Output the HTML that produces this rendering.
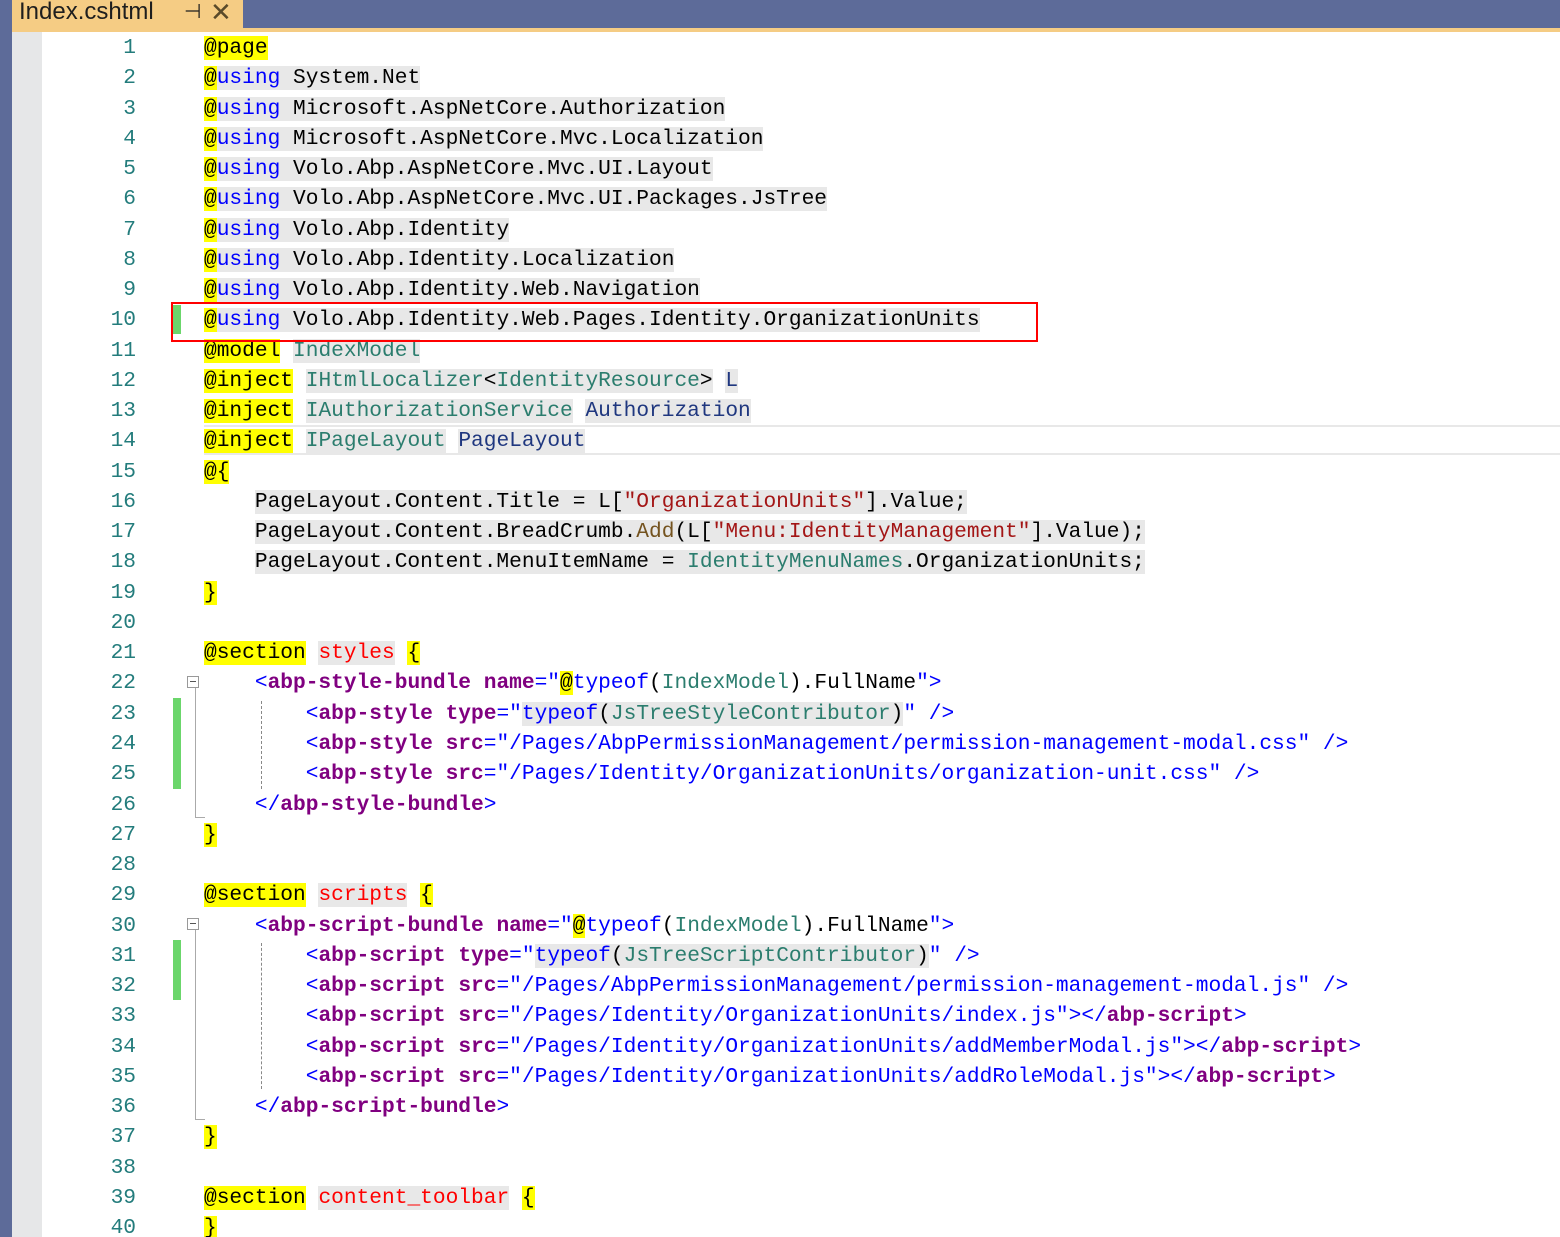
<!DOCTYPE html>
<html><head><meta charset="utf-8"><style>
html,body{margin:0;padding:0;width:1560px;height:1237px;overflow:hidden;background:#fff;position:relative}
.topbar{position:absolute;left:0;top:0;width:1560px;height:28px;background:#5D6B99}
.tab{position:absolute;left:12px;top:0;width:231px;height:28px;background:#F5CC84;font-family:"Liberation Sans",sans-serif;font-size:24px;color:#1E1E1E;line-height:26px}
.tab .t{position:absolute;left:7px;top:-1px}
.tab .p{position:absolute;left:172px;top:-1px;font-size:20px}
.tab .x{position:absolute;left:198px;top:-1px;font-size:26px;color:#5a4a2a}
.accent{position:absolute;left:12px;top:28px;width:1548px;height:4px;background:#F5CC84}
.lm{position:absolute;left:0;top:28px;width:12px;height:1209px;background:#5D6B99}
.gut{position:absolute;left:12px;top:32px;width:30px;height:1205px;background:#E6E7E8}
.ln{position:absolute;left:42px;width:94px;text-align:right;font-family:"Liberation Mono",monospace;font-size:21.2px;color:#237C7C;height:30px;line-height:30px;margin-top:2px}
.l{position:absolute;left:204px;white-space:pre;font-family:"Liberation Mono",monospace;font-size:21.2px;height:30px;line-height:30px;color:#000;margin-top:2px}
.y{background:#FFFF00}
.g{background:#E8E8E8}
.k{color:#0000FF}
.t2{color:#2B7D6E}
.pr{color:#1F377F}
.s{color:#A31515}
.m{color:#74531F}
.r{color:#FF0000}
.tg{color:#800080;font-weight:bold}
.b{color:#0000FF}
.chg{position:absolute;left:173px;width:8px;background:#6BD66B}
</style></head><body>
<div class="topbar"></div>
<div class="tab"><span class="t">Index.cshtml</span><span class="p">&#8867;</span><span class="x">&#10005;</span></div>
<div class="accent"></div>
<div class="lm"></div>
<div class="gut"></div>

<div style="position:absolute;left:204px;top:425px;width:1356px;height:30px;border-top:2px solid #E8E8E8;border-bottom:2px solid #E8E8E8;box-sizing:border-box"></div>

<div class="ln" style="top:31px">1</div>
<div class="ln" style="top:61.26px">2</div>
<div class="ln" style="top:91.52px">3</div>
<div class="ln" style="top:121.78px">4</div>
<div class="ln" style="top:152.04px">5</div>
<div class="ln" style="top:182.3px">6</div>
<div class="ln" style="top:212.56px">7</div>
<div class="ln" style="top:242.82px">8</div>
<div class="ln" style="top:273.08px">9</div>
<div class="ln" style="top:303.34px">10</div>
<div class="ln" style="top:333.6px">11</div>
<div class="ln" style="top:363.86px">12</div>
<div class="ln" style="top:394.12px">13</div>
<div class="ln" style="top:424.38px">14</div>
<div class="ln" style="top:454.64px">15</div>
<div class="ln" style="top:484.9px">16</div>
<div class="ln" style="top:515.16px">17</div>
<div class="ln" style="top:545.42px">18</div>
<div class="ln" style="top:575.68px">19</div>
<div class="ln" style="top:605.94px">20</div>
<div class="ln" style="top:636.2px">21</div>
<div class="ln" style="top:666.46px">22</div>
<div class="ln" style="top:696.72px">23</div>
<div class="ln" style="top:726.98px">24</div>
<div class="ln" style="top:757.24px">25</div>
<div class="ln" style="top:787.5px">26</div>
<div class="ln" style="top:817.76px">27</div>
<div class="ln" style="top:848.02px">28</div>
<div class="ln" style="top:878.28px">29</div>
<div class="ln" style="top:908.54px">30</div>
<div class="ln" style="top:938.8px">31</div>
<div class="ln" style="top:969.06px">32</div>
<div class="ln" style="top:999.32px">33</div>
<div class="ln" style="top:1029.58px">34</div>
<div class="ln" style="top:1059.84px">35</div>
<div class="ln" style="top:1090.1px">36</div>
<div class="ln" style="top:1120.36px">37</div>
<div class="ln" style="top:1150.62px">38</div>
<div class="ln" style="top:1180.88px">39</div>
<div class="ln" style="top:1211.14px">40</div>

<div class="l" style="top:31px"><span class="y">@page</span></div>
<div class="l" style="top:61.26px"><span class="y">@</span><span class="g"><span class="k">using</span> System.Net</span></div>
<div class="l" style="top:91.52px"><span class="y">@</span><span class="g"><span class="k">using</span> Microsoft.AspNetCore.Authorization</span></div>
<div class="l" style="top:121.78px"><span class="y">@</span><span class="g"><span class="k">using</span> Microsoft.AspNetCore.Mvc.Localization</span></div>
<div class="l" style="top:152.04px"><span class="y">@</span><span class="g"><span class="k">using</span> Volo.Abp.AspNetCore.Mvc.UI.Layout</span></div>
<div class="l" style="top:182.3px"><span class="y">@</span><span class="g"><span class="k">using</span> Volo.Abp.AspNetCore.Mvc.UI.Packages.JsTree</span></div>
<div class="l" style="top:212.56px"><span class="y">@</span><span class="g"><span class="k">using</span> Volo.Abp.Identity</span></div>
<div class="l" style="top:242.82px"><span class="y">@</span><span class="g"><span class="k">using</span> Volo.Abp.Identity.Localization</span></div>
<div class="l" style="top:273.08px"><span class="y">@</span><span class="g"><span class="k">using</span> Volo.Abp.Identity.Web.Navigation</span></div>
<div class="l" style="top:303.34px"><span class="y">@</span><span class="g"><span class="k">using</span> Volo.Abp.Identity.Web.Pages.Identity.OrganizationUnits</span></div>
<div class="l" style="top:333.6px"><span class="y">@model</span> <span class="g t2">IndexModel</span></div>
<div class="l" style="top:363.86px"><span class="y">@inject</span> <span class="g"><span class="t2">IHtmlLocalizer</span>&lt;<span class="t2">IdentityResource</span>&gt;</span> <span class="g pr">L</span></div>
<div class="l" style="top:394.12px"><span class="y">@inject</span> <span class="g"><span class="t2">IAuthorizationService</span></span> <span class="g pr">Authorization</span></div>
<div class="l" style="top:424.38px"><span class="y">@inject</span> <span class="g"><span class="t2">IPageLayout</span></span> <span class="g pr">PageLayout</span></div>
<div class="l" style="top:454.64px"><span class="y">@{</span></div>
<div class="l" style="top:484.9px">    <span class="g">PageLayout.Content.Title = L[<span class="s">"OrganizationUnits"</span>].Value;</span></div>
<div class="l" style="top:515.16px">    <span class="g">PageLayout.Content.BreadCrumb.<span class="m">Add</span>(L[<span class="s">"Menu:IdentityManagement"</span>].Value);</span></div>
<div class="l" style="top:545.42px">    <span class="g">PageLayout.Content.MenuItemName = <span class="t2">IdentityMenuNames</span>.OrganizationUnits;</span></div>
<div class="l" style="top:575.68px"><span class="y">}</span></div>
<div class="l" style="top:636.2px"><span class="y">@section</span> <span class="g r">styles</span> <span class="y">{</span></div>
<div class="l" style="top:666.46px">    <span class="b">&lt;</span><span class="tg">abp-style-bundle</span> <span class="tg">name</span><span class="b">="</span><span class="y">@</span><span class="k">typeof</span>(<span class="t2">IndexModel</span>).FullName<span class="b">"&gt;</span></div>
<div class="l" style="top:696.72px">        <span class="b">&lt;</span><span class="tg">abp-style</span> <span class="tg">type</span><span class="b">="</span><span class="g"><span class="k">typeof</span>(<span class="t2">JsTreeStyleContributor</span>)</span><span class="b">"</span> <span class="b">/&gt;</span></div>
<div class="l" style="top:726.98px">        <span class="b">&lt;</span><span class="tg">abp-style</span> <span class="tg">src</span><span class="b">="/Pages/AbpPermissionManagement/permission-management-modal.css"</span> <span class="b">/&gt;</span></div>
<div class="l" style="top:757.24px">        <span class="b">&lt;</span><span class="tg">abp-style</span> <span class="tg">src</span><span class="b">="/Pages/Identity/OrganizationUnits/organization-unit.css"</span> <span class="b">/&gt;</span></div>
<div class="l" style="top:787.5px">    <span class="b">&lt;/</span><span class="tg">abp-style-bundle</span><span class="b">&gt;</span></div>
<div class="l" style="top:817.76px"><span class="y">}</span></div>
<div class="l" style="top:878.28px"><span class="y">@section</span> <span class="g r">scripts</span> <span class="y">{</span></div>
<div class="l" style="top:908.54px">    <span class="b">&lt;</span><span class="tg">abp-script-bundle</span> <span class="tg">name</span><span class="b">="</span><span class="y">@</span><span class="k">typeof</span>(<span class="t2">IndexModel</span>).FullName<span class="b">"&gt;</span></div>
<div class="l" style="top:938.8px">        <span class="b">&lt;</span><span class="tg">abp-script</span> <span class="tg">type</span><span class="b">="</span><span class="g"><span class="k">typeof</span>(<span class="t2">JsTreeScriptContributor</span>)</span><span class="b">"</span> <span class="b">/&gt;</span></div>
<div class="l" style="top:969.06px">        <span class="b">&lt;</span><span class="tg">abp-script</span> <span class="tg">src</span><span class="b">="/Pages/AbpPermissionManagement/permission-management-modal.js"</span> <span class="b">/&gt;</span></div>
<div class="l" style="top:999.32px">        <span class="b">&lt;</span><span class="tg">abp-script</span> <span class="tg">src</span><span class="b">="/Pages/Identity/OrganizationUnits/index.js"&gt;&lt;/</span><span class="tg">abp-script</span><span class="b">&gt;</span></div>
<div class="l" style="top:1029.58px">        <span class="b">&lt;</span><span class="tg">abp-script</span> <span class="tg">src</span><span class="b">="/Pages/Identity/OrganizationUnits/addMemberModal.js"&gt;&lt;/</span><span class="tg">abp-script</span><span class="b">&gt;</span></div>
<div class="l" style="top:1059.84px">        <span class="b">&lt;</span><span class="tg">abp-script</span> <span class="tg">src</span><span class="b">="/Pages/Identity/OrganizationUnits/addRoleModal.js"&gt;&lt;/</span><span class="tg">abp-script</span><span class="b">&gt;</span></div>
<div class="l" style="top:1090.1px">    <span class="b">&lt;/</span><span class="tg">abp-script-bundle</span><span class="b">&gt;</span></div>
<div class="l" style="top:1120.36px"><span class="y">}</span></div>
<div class="l" style="top:1180.88px"><span class="y">@section</span> <span class="g r">content_toolbar</span> <span class="y">{</span></div>
<div class="l" style="top:1211.14px"><span class="y">}</span></div>

<div class="chg" style="top:305px;height:29px"></div>
<div class="chg" style="top:698px;height:91px"></div>
<div class="chg" style="top:940px;height:60px"></div>

<div style="position:absolute;left:187px;top:676px;width:12px;height:12px;border:1px solid #999;background:#fff;box-sizing:border-box"></div>
<div style="position:absolute;left:190px;top:681px;width:6px;height:1px;background:#555"></div>
<div style="position:absolute;left:195px;top:688px;width:1px;height:130px;background:#aaa"></div>
<div style="position:absolute;left:195px;top:817px;width:10px;height:1px;background:#aaa"></div>
<div style="position:absolute;left:187px;top:918px;width:12px;height:12px;border:1px solid #999;background:#fff;box-sizing:border-box"></div>
<div style="position:absolute;left:190px;top:923px;width:6px;height:1px;background:#555"></div>
<div style="position:absolute;left:195px;top:930px;width:1px;height:190px;background:#aaa"></div>
<div style="position:absolute;left:195px;top:1119px;width:10px;height:1px;background:#aaa"></div>

<div style="position:absolute;left:261px;top:701px;width:0;height:88px;border-left:1px dashed #888"></div>
<div style="position:absolute;left:261px;top:943px;width:0;height:146px;border-left:1px dashed #888"></div>

<div style="position:absolute;left:171px;top:302px;width:867px;height:40px;border:2px solid #FF0000;box-sizing:border-box"></div>
</body></html>
